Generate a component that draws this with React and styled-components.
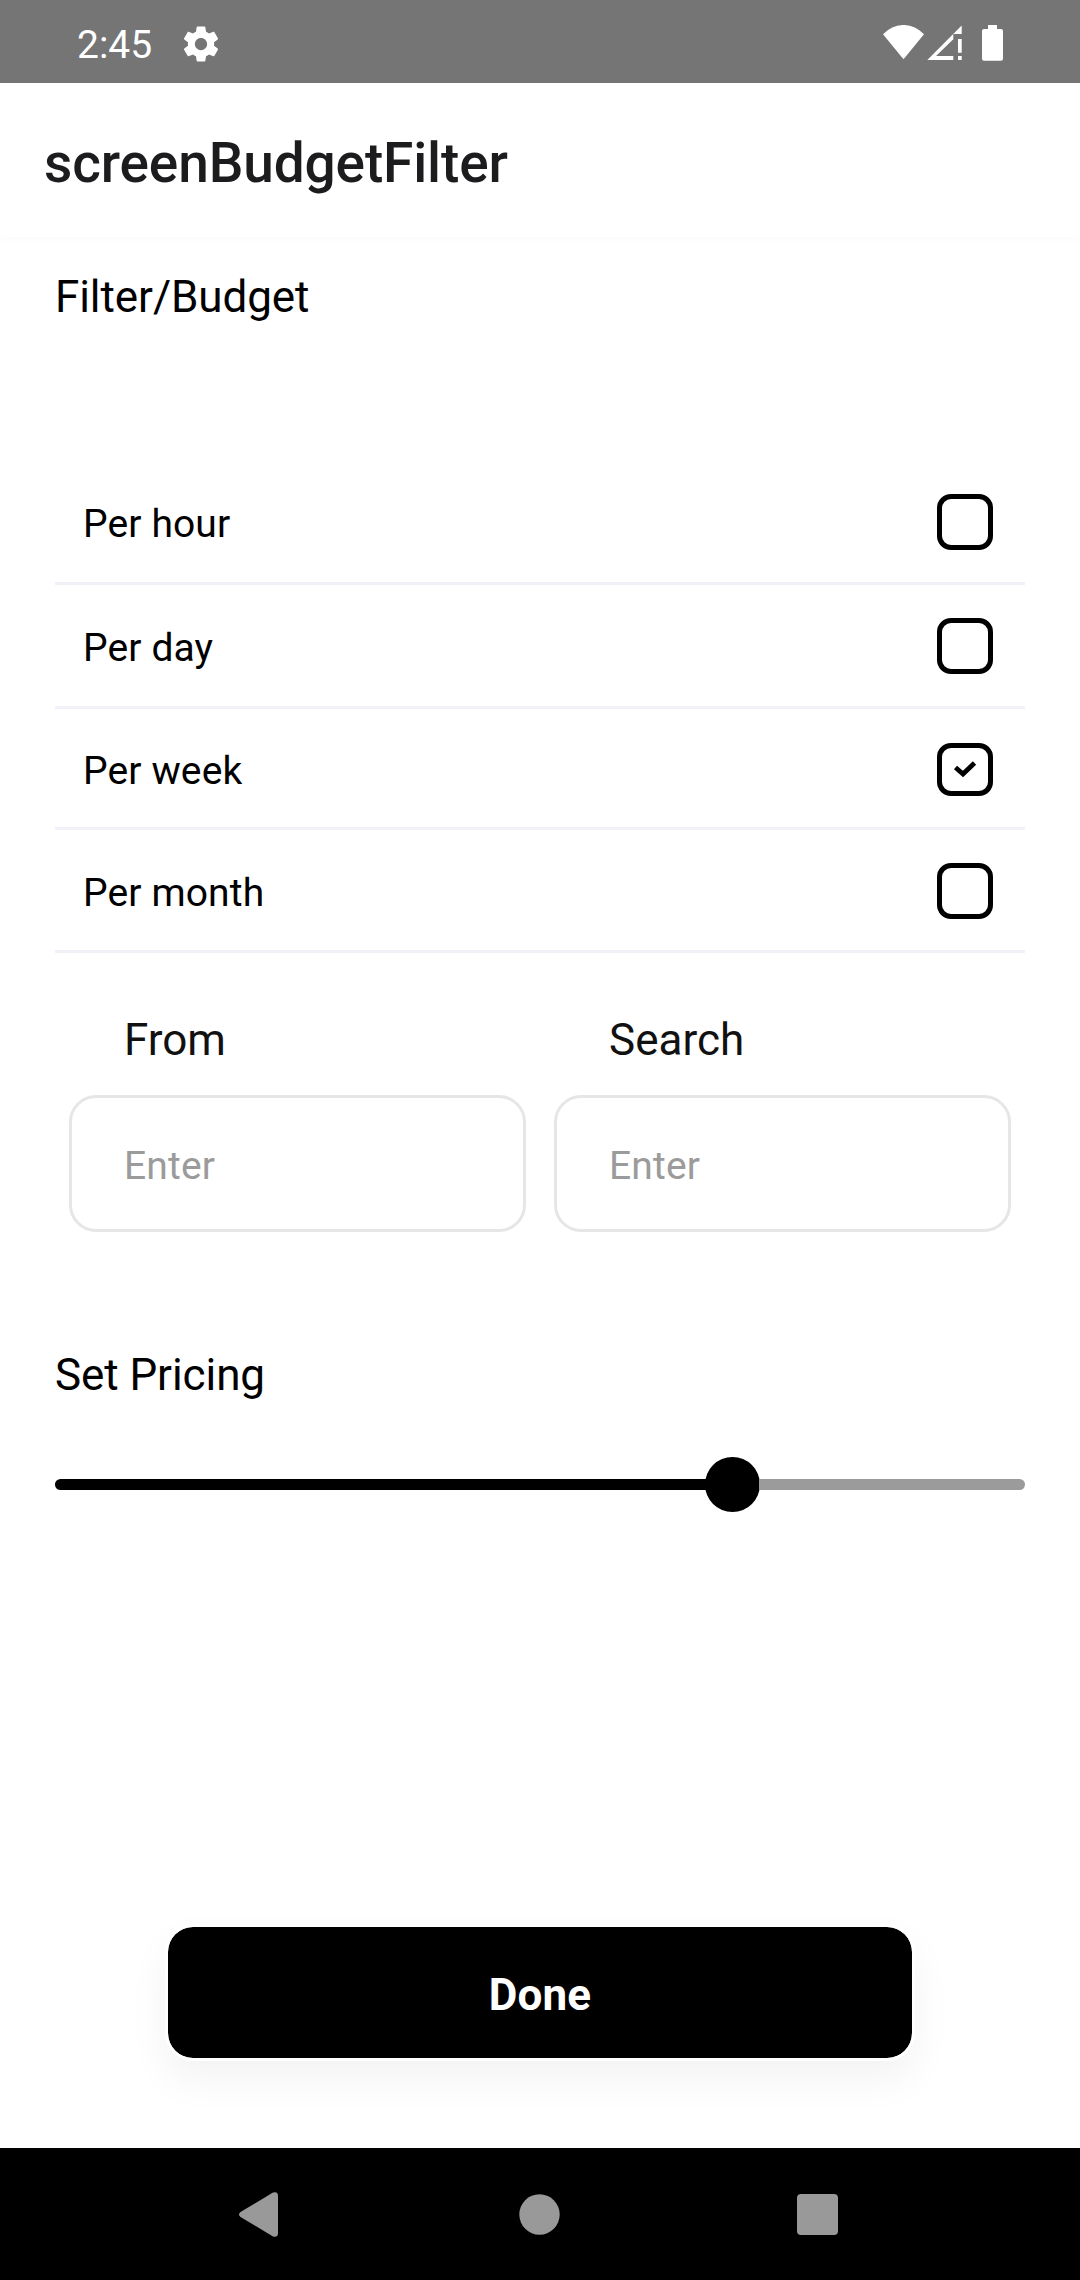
import React, { useState } from 'react';
import styled, { createGlobalStyle } from 'styled-components';

const GlobalStyle = createGlobalStyle`
  *, *::before, *::after { box-sizing: border-box; }
  body { margin: 0; background: #fff; }
`;

const Screen = styled.div`
  display: flex;
  flex-direction: column;
  width: 1080px;
  height: 2280px;
  background: #fff;
  color: #000;
  font-family: Roboto, 'Liberation Sans', sans-serif;
`;

const StatusBar = styled.div`
  display: flex;
  align-items: center;
  flex: none;
  height: 83px;
  padding: 4px 76px 0 77px;
  background: #757575;
  color: #fff;
  svg { display: block; fill: currentColor; }
`;

const Clock = styled.span`
  width: 103px;
  padding-top: 3px;
  font-size: 39px;
  line-height: 48px;
`;

const StatusIcons = styled.div`
  display: flex;
  margin-left: auto;
`;

const AppBar = styled.header`
  display: flex;
  align-items: center;
  flex: none;
  height: 154px;
  padding: 6px 44px 0;
  background: #fff;
  box-shadow: 0 3px 10px rgba(0, 0, 0, 0.02);
`;

const Title = styled.h1`
  margin: 0;
  font-size: 55px;
  line-height: 64px;
  font-weight: 500;
  letter-spacing: -0.14px;
  color: #1c1c1e;
`;

const Content = styled.main`
  display: flex;
  flex-direction: column;
  flex: 1;
  padding: 34px 55px 0;
`;

const Heading = styled.h2`
  margin: 0;
  font-size: 44px;
  line-height: 52px;
  font-weight: 400;
  letter-spacing: -0.08px;
`;

const Options = styled.div`
  margin-top: 138px;
`;

const OptionRow = styled.label`
  display: flex;
  align-items: center;
  justify-content: space-between;
  height: ${(p) => p.$height}px;
  padding: ${(p) => (p.$height < 124 ? 2 : 0)}px 32px 0 28px;
  border-bottom: 3px solid #f1f1f8;
`;

const OptionText = styled.span`
  padding-top: 4px;
  font-size: 39px;
  line-height: 46px;
  letter-spacing: 0.12px;
`;

const Box = styled.span`
  display: grid;
  place-items: center;
  width: 56px;
  height: ${(p) => (p.$checked ? 53 : 56)}px;
  border: 5.5px solid #000;
  border-radius: 14px;
`;

const Fields = styled.div`
  display: flex;
  gap: 28px;
  padding: 0 14px;
  margin-top: 61px;
`;

const Field = styled.label`
  display: flex;
  flex-direction: column;
  flex: 1;
`;

const FieldLabel = styled.span`
  padding-left: 55px;
  font-size: 44px;
  line-height: 52px;
  color: #111;
`;

const Input = styled.input`
  width: 100%;
  height: 137px;
  margin-top: 29px;
  padding: 4px 52px 0;
  border: 3px solid #e6e6e6;
  border-radius: 27px;
  background: #fff;
  outline: none;
  font: 39px Roboto, 'Liberation Sans', sans-serif;
  letter-spacing: 0.15px;
  color: #111;
  &::placeholder { color: #9b9b9b; opacity: 1; }
`;

const PricingHeading = styled(Heading)`
  margin-top: 117px;
`;

const Slider = styled.div`
  display: flex;
  align-items: center;
  height: 55px;
  margin-top: 56px;
`;

const Filled = styled.div`
  height: 11px;
  border-radius: 5.5px 0 0 5.5px;
  background: #000;
`;

const Thumb = styled.div`
  flex: none;
  width: 55px;
  height: 55px;
  border-radius: 50%;
  background: #000;
  margin: 0 -1px;
`;

const Rest = styled.div`
  flex: 1;
  height: 11px;
  border-radius: 0 5.5px 5.5px 0;
  background: #9b9b9b;
`;

const DoneButton = styled.button`
  align-self: center;
  width: 750px;
  height: 137px;
  margin: auto 0 87px;
  padding: 4px 0 0;
  border: 3px solid #fff;
  border-radius: 28px;
  background: #000;
  background-clip: padding-box;
  box-shadow: 0 19px 40px rgba(0, 0, 0, 0.05);
  color: #fff;
  font: 700 44px/52px Roboto, 'Liberation Sans', sans-serif;
  letter-spacing: 0.2px;
`;

const NavBar = styled.nav`
  display: flex;
  align-items: center;
  justify-content: space-between;
  flex: none;
  height: 132px;
  padding: 0 242px 0 239px;
  background: #000;
  svg { display: block; fill: #999; }
`;

const SettingsIcon = () => (
  <svg width="42" height="42" viewBox="0 0 24 24">
    <path d="M19.43 12.98c.04-.32.07-.64.07-.98s-.03-.66-.07-.98l2.11-1.65c.19-.15.24-.42.12-.64l-2-3.46c-.12-.22-.39-.3-.61-.22l-2.49 1c-.52-.4-1.08-.73-1.69-.98l-.38-2.65C14.46 2.18 14.25 2 14 2h-4c-.25 0-.46.18-.49.42l-.38 2.65c-.61.25-1.17.59-1.69.98l-2.49-1c-.23-.09-.49 0-.61.22l-2 3.46c-.13.22-.07.49.12.64l2.11 1.65c-.04.32-.07.65-.07.98s.03.66.07.98l-2.11 1.65c-.19.15-.24.42-.12.64l2 3.46c.12.22.39.3.61.22l2.49-1c.52.4 1.08.73 1.69.98l.38 2.65c.03.24.24.42.49.42h4c.25 0 .46-.18.49-.42l.38-2.65c.61-.25 1.17-.59 1.69-.98l2.49 1c.23.09.49 0 .61-.22l2-3.46c.12-.22.07-.49-.12-.64l-2.11-1.65zM12 15.5c-1.93 0-3.5-1.57-3.5-3.5s1.57-3.5 3.5-3.5 3.5 1.57 3.5 3.5-1.57 3.5-3.5 3.5z" />
  </svg>
);

const SignalIcons = () => (
  <svg width="121" height="37" viewBox="0 0 121 37">
    <path d="M0 9.300A27.200 27.200 0 0 1 41 9.300L20.500 34.300Z" />
    <path fillRule="evenodd" d="M44.300 35L78.700 0.500V9H70.300V35ZM53 31H70.300V14.300Z" />
    <path d="M75 14h3.700v13.800h-3.700zM75 31h3.700v4h-3.700z" />
    <path d="M105 0h9v4h4q2 0 2 2v27.700q0 2-2 2h-17q-2 0-2-2V6q0-2 2-2h4Z" />
  </svg>
);

const CheckIcon = () => (
  <svg width="24" height="18" viewBox="0 0 24 18" fill="none" stroke="#000" strokeWidth="4.800">
    <path d="M2.500 7.500L10 14L21.500 3" />
  </svg>
);

const PERIODS = [
  { label: 'Per hour', height: 124 },
  { label: 'Per day', height: 124 },
  { label: 'Per week', height: 121 },
  { label: 'Per month', height: 123 },
];

export default function App() {
  const [selected] = useState('Per week');
  const [price] = useState(0.6708);

  return (
    <>
      <GlobalStyle />
      <Screen>
        <StatusBar>
          <Clock>2:45</Clock>
          <SettingsIcon />
          <StatusIcons>
            <SignalIcons />
          </StatusIcons>
        </StatusBar>
        <AppBar>
          <Title>screenBudgetFilter</Title>
        </AppBar>
        <Content>
          <Heading>Filter/Budget</Heading>
          <Options>
            {PERIODS.map((period) => (
              <OptionRow key={period.label} $height={period.height}>
                <OptionText>{period.label}</OptionText>
                <Box $checked={period.label === selected}>
                  {period.label === selected && <CheckIcon />}
                </Box>
              </OptionRow>
            ))}
          </Options>
          <Fields>
            <Field>
              <FieldLabel>From</FieldLabel>
              <Input placeholder="Enter" />
            </Field>
            <Field>
              <FieldLabel>Search</FieldLabel>
              <Input placeholder="Enter" />
            </Field>
          </Fields>
          <PricingHeading>Set Pricing</PricingHeading>
          <Slider>
            <Filled style={{ width: `${price * 100}%` }} />
            <Thumb />
            <Rest />
          </Slider>
          <DoneButton>Done</DoneButton>
        </Content>
        <NavBar>
          <svg width="43" height="45" viewBox="0 0 43 45">
            <path d="M1.500 20L34 0.600Q39 -1 39 4V41Q39 46 34 44.400L1.500 25Q-1.500 22.500 1.500 20Z" />
          </svg>
          <svg width="41" height="41" viewBox="0 0 41 41">
            <circle cx="20.500" cy="20.500" r="20.200" />
          </svg>
          <svg width="41" height="41" viewBox="0 0 41 41">
            <rect width="41" height="41" rx="4" />
          </svg>
        </NavBar>
      </Screen>
    </>
  );
}
